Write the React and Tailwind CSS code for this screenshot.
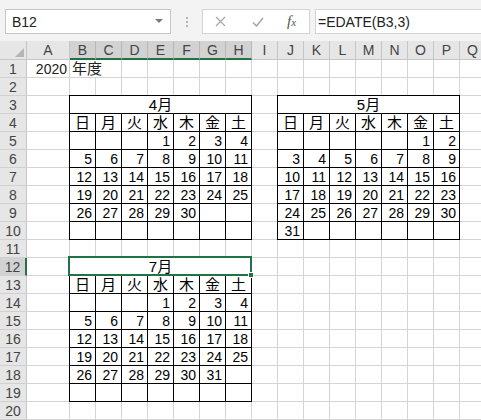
import React from 'react';

const COLS = ['A', 'B', 'C', 'D', 'E', 'F', 'G', 'H', 'I', 'J', 'K', 'L', 'M', 'N', 'O', 'P', 'Q'];
const DAYS = ['日', '月', '火', '水', '木', '金', '土'];
const SELECTED_COLS = ['B', 'C', 'D', 'E', 'F', 'G', 'H'];

// calendar blocks: column index range (0 = A) and sheet rows they cover
const CALENDARS = [
  { title: '4月', first: 3, days: 30, cols: [1, 7], rows: [3, 10], pos: 'col-start-3 col-end-10 row-start-4 row-end-12' },
  { title: '5月', first: 5, days: 31, cols: [9, 15], rows: [3, 10], pos: 'col-start-11 col-end-18 row-start-4 row-end-12' },
  { title: '7月', first: 3, days: 31, cols: [1, 7], rows: [12, 19], pos: 'col-start-3 col-end-10 row-start-13 row-end-21', selected: true },
];

const inCalendar = (r, c) =>
  CALENDARS.some(cal => r >= cal.rows[0] && r <= cal.rows[1] && c >= cal.cols[0] && c <= cal.cols[1]);

// kanji text: keep the line box inside the 18px row
const Kanji = ({ children }) => (
  <span className="inline-block h-[16px] leading-[16px] overflow-visible">{children}</span>
);

function Calendar({ title, first, days, pos, selected }) {
  const cells = [...Array(first).fill(null), ...Array.from({ length: days }, (_, i) => i + 1)];
  while (cells.length < 42) cells.push(null);

  return (
    <div className={`${pos} -ml-px -mt-px z-10 grid grid-cols-[repeat(7,26px)] grid-rows-[repeat(8,18px)] border-l border-t border-black bg-white text-black`}>
      <div className="relative col-span-7 border-r border-b border-black flex items-center justify-center text-[15px] leading-none">
        <Kanji>{title}</Kanji>
        {selected && (
          <>
            <div className="absolute -left-[2px] -top-[2px] -right-px -bottom-px border-2 border-[#217346] pointer-events-none"></div>
            <div className="absolute -right-[3px] -bottom-[3px] w-[6px] h-[6px] bg-[#217346] border border-white"></div>
          </>
        )}
      </div>
      {DAYS.map(d => (
        <div key={d} className="border-r border-b border-black flex items-center justify-center text-[15px] leading-none">
          <Kanji>{d}</Kanji>
        </div>
      ))}
      {cells.map((n, i) => (
        <div key={i} className="border-r border-b border-black flex items-center justify-end pr-[3px] text-[14px] leading-none">{n}</div>
      ))}
    </div>
  );
}

export default function App() {
  const sheet = [];

  // column header row
  sheet.push(
    <div key="corner" className="bg-[#e6e6e6] border-r border-b border-[#c6c6c6] flex items-end justify-end pr-[2px] pb-[2px]">
      <svg width="9" height="9" viewBox="0 0 9 9"><polygon points="9,0 9,9 0,9" fill="#b5b5b5" /></svg>
    </div>
  );
  COLS.forEach(col => {
    const sel = SELECTED_COLS.includes(col);
    sheet.push(
      <div
        key={'h' + col}
        className={`flex items-center justify-center text-[14px] leading-none text-[#444] border-r ${sel ? 'bg-[#d2d2d2] border-r-[#b8b8b8] border-b-2 border-b-[#217346]' : 'bg-[#e6e6e6] border-r-[#c6c6c6] border-b border-b-[#c6c6c6]'}`}
      >
        {col}
      </div>
    );
  });

  // rows 1..20
  for (let r = 1; r <= 20; r++) {
    const sel = r === 12;
    sheet.push(
      <div
        key={'r' + r}
        className={`flex items-center justify-center text-[14px] leading-none text-[#444] border-b border-b-[#d0d0d0] ${sel ? 'bg-[#d2d2d2] border-r-2 border-r-[#217346]' : 'bg-[#e6e6e6] border-r border-r-[#c6c6c6]'}`}
      >
        {r}
      </div>
    );
    COLS.forEach((col, c) => {
      if (inCalendar(r, c)) return;
      if (r === 1 && col === 'C') return;
      if (r === 1 && col === 'A') {
        sheet.push(
          <div key="A1" className="border-r border-b border-[#d4d4d4] flex items-center justify-end pr-[2px] text-[14px] leading-none">2020</div>
        );
        return;
      }
      if (r === 1 && col === 'B') {
        sheet.push(
          <div key="B1" className="col-span-2 border-r border-b border-[#d4d4d4] flex items-center pl-[2px] text-[15px] leading-none">
            <Kanji>年度</Kanji>
          </div>
        );
        return;
      }
      sheet.push(<div key={col + r} className="border-r border-b border-[#d4d4d4]"></div>);
    });
  }

  return (
    <div className="w-[481px] h-[420px] overflow-hidden bg-white font-['Liberation_Sans','Noto_Sans_CJK_JP',sans-serif] text-[#222]">
      {/* formula bar */}
      <div className="h-[41px] bg-[#f3f3f3] flex items-start pt-[9px]">
        <div className="ml-[5px] w-[166px] h-[25px] bg-white border border-[#c6c6c6] flex items-center justify-between pl-[6px] pr-[7px]">
          <span className="text-[14px] leading-none">B12</span>
          <svg width="8" height="5" viewBox="0 0 8 5"><polygon points="0,0 8,0 4,4" fill="#7a7a7a" /></svg>
        </div>
        <div className="w-[31px] h-[25px] flex flex-col items-center justify-center gap-[2px]">
          <span className="w-[2px] h-[2px] bg-[#b4b4b4]"></span>
          <span className="w-[2px] h-[2px] bg-[#b4b4b4]"></span>
          <span className="w-[2px] h-[2px] bg-[#b4b4b4]"></span>
        </div>
        <div className="w-[108px] h-[25px] bg-white border border-[#d4d4d4] flex items-center">
          <svg className="ml-[12px]" width="11" height="11" viewBox="0 0 11 11" stroke="#a8a8a8" strokeWidth="1.3" fill="none"><path d="M1 1 L10 10 M10 1 L1 10" /></svg>
          <svg className="ml-[26px]" width="12" height="10" viewBox="0 0 12 10" stroke="#a8a8a8" strokeWidth="1.6" fill="none"><path d="M1 5.5 L4.5 9 L11 1" /></svg>
          <span className="ml-[23px] italic font-['Liberation_Serif',serif] text-[#555] text-[15px] leading-none">f<span className="text-[11px]">x</span></span>
        </div>
        <div className="ml-[5px] flex-1 h-[25px] bg-white border border-[#d4d4d4] border-r-0 flex items-center pl-[2px]">
          <span className="text-[14px] leading-none">=EDATE(B3,3)</span>
        </div>
      </div>

      {/* sheet grid */}
      <div className="grid grid-cols-[27px_43px_repeat(16,26px)] grid-rows-[19px_repeat(20,18px)]">
        {sheet}
        {CALENDARS.map(cal => (
          <Calendar key={cal.title} {...cal} />
        ))}
      </div>
    </div>
  );
}
